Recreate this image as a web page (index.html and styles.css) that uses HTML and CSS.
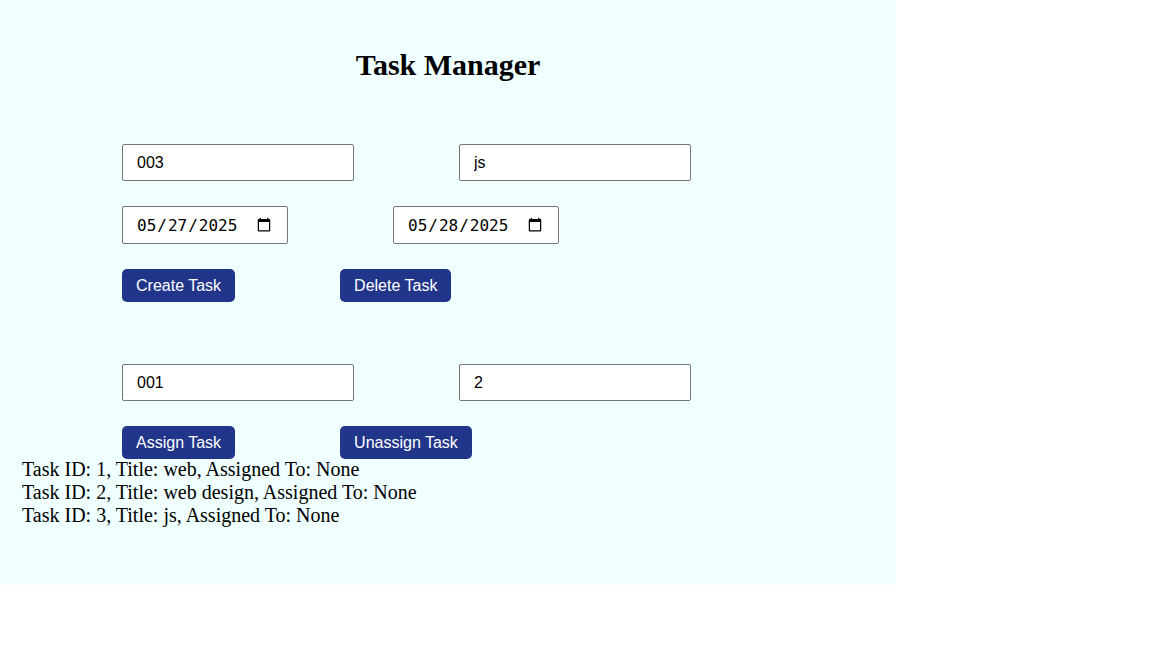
FILE: index.html
```html
<!DOCTYPE html>
<html lang="en">
<head>
<meta charset="utf-8">
<title>Task Manager</title>
<link rel="stylesheet" href="styles.css">
</head>
<body>
<div class="app">
  <h1 class="title">Task Manager</h1>
  <div class="form form-create">
    <div class="row">
      <input class="text-input" type="text" value="003">
      <input class="text-input" type="text" value="js">
    </div>
    <div class="row">
      <input class="date-input" type="date" value="2025-05-27">
      <input class="date-input" type="date" value="2025-05-28">
    </div>
    <div class="row">
      <button class="btn">Create Task</button>
      <button class="btn">Delete Task</button>
    </div>
  </div>
  <div class="form form-assign">
    <div class="row">
      <input class="text-input" type="text" value="001">
      <input class="text-input" type="text" value="2">
    </div>
    <div class="row">
      <button class="btn">Assign Task</button>
      <button class="btn">Unassign Task</button>
    </div>
  </div>
  <div class="task-list">
    <div class="task">Task ID: 1, Title: web, Assigned To: None</div>
    <div class="task">Task ID: 2, Title: web design, Assigned To: None</div>
    <div class="task">Task ID: 3, Title: js, Assigned To: None</div>
  </div>
</div>
</body>
</html>
```

FILE: styles.css
```css
html, body {
  margin: 0;
  padding: 0;
  background: #ffffff;
}

body {
  font-family: "Liberation Serif", "Times New Roman", serif;
  color: #000;
}

.app {
  width: 896px;
  background: #f0ffff;
  padding: 48px 0 58px;
  box-sizing: border-box;
}

.title {
  margin: 0;
  font-size: 30px;
  font-weight: bold;
  text-align: center;
  line-height: 34px;
}

.form {
  display: flex;
  flex-direction: column;
  gap: 25px;
  padding-left: 122px;
}

.form-create {
  margin-top: 62px;
}

.form-assign {
  margin-top: 62px;
}

.row {
  display: flex;
  gap: 105px;
  align-items: flex-start;
}

.text-input {
  box-sizing: border-box;
  width: 232px;
  height: 37px;
  padding: 0 14px;
  margin: 0;
  border: 1px solid #767676;
  border-radius: 2px;
  background: #fff;
  font-family: "Liberation Sans", Arial, sans-serif;
  font-size: 16px;
  color: #000;
}

.date-input {
  box-sizing: border-box;
  width: 166px;
  height: 38px;
  padding: 0 13px;
  margin: 0;
  border: 1px solid #767676;
  border-radius: 2px;
  background: #fff;
  font-family: "DejaVu Sans Mono", "Liberation Mono", monospace;
  font-size: 16px;
  color: #000;
}

.btn {
  box-sizing: border-box;
  height: 33px;
  padding: 0 14px;
  margin: 0;
  border: none;
  border-radius: 5px;
  background: #21358a;
  color: #fff;
  font-family: "Liberation Sans", Arial, sans-serif;
  font-size: 16px;
  cursor: pointer;
}

.task-list {
  padding-left: 22px;
  margin-top: -1px;
  font-size: 20px;
  line-height: 23px;
}
```
